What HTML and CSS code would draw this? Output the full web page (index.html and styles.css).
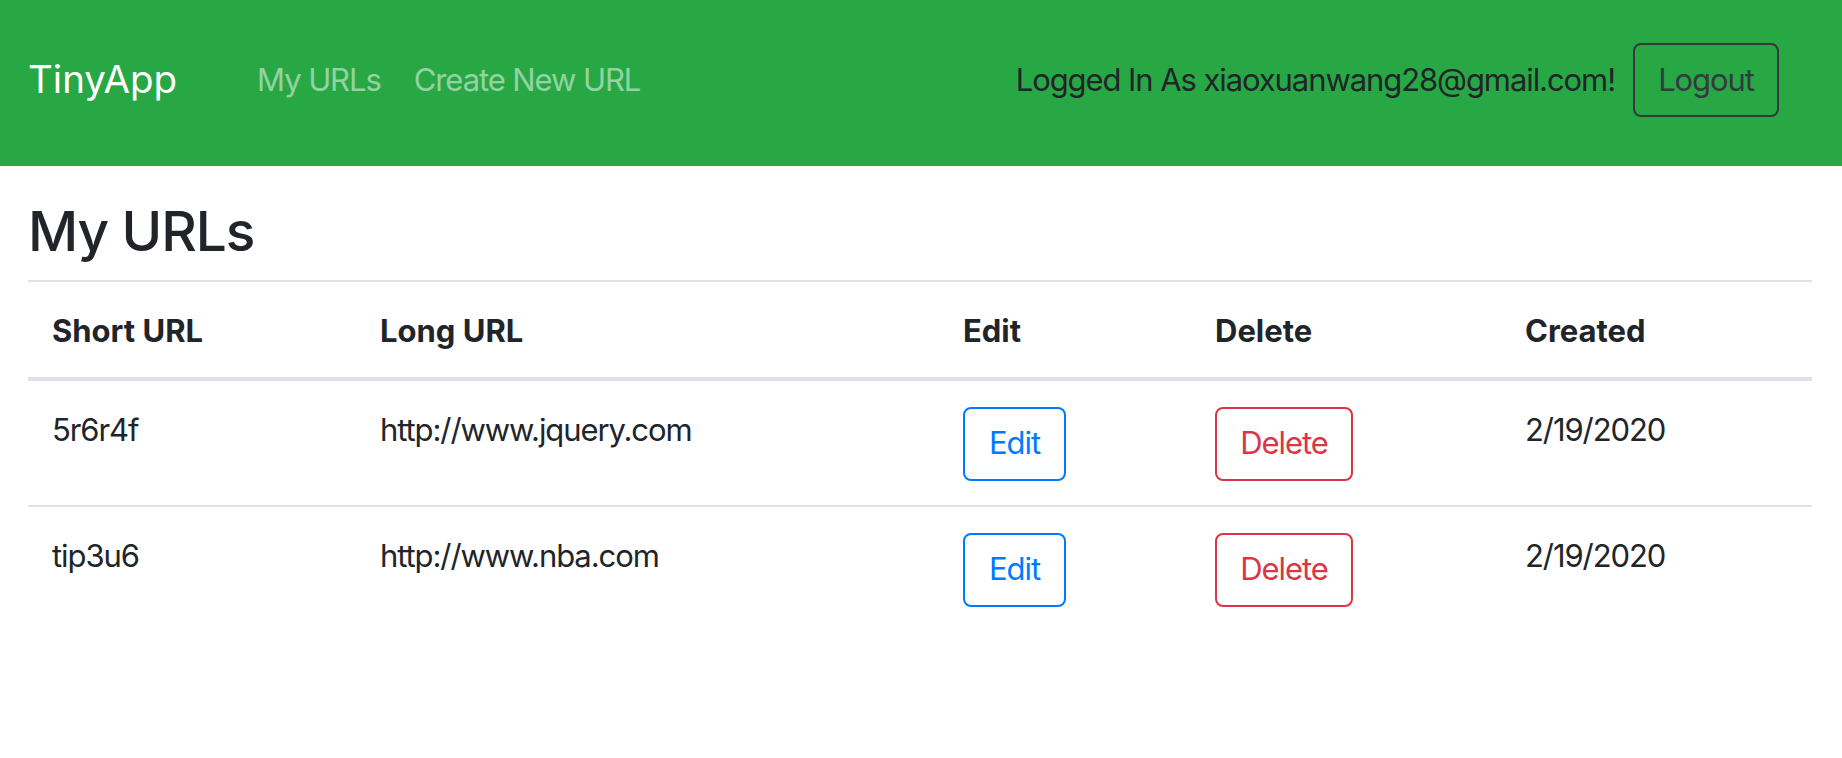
FILE: index.html
```html
<!DOCTYPE html>
<html lang="en">
<head>
<meta charset="utf-8">
<title>TinyApp</title>
<link rel="stylesheet" href="styles.css">
</head>
<body>
<nav class="navbar">
  <a class="brand" href="#">TinyApp</a>
  <div class="nav-links">
    <a class="nav-link" href="#">My URLs</a>
    <a class="nav-link" href="#">Create New URL</a>
  </div>
  <div class="nav-user">
    <span class="user-text">Logged In As xiaoxuanwang28@gmail.com!</span>
    <button class="btn btn-dark">Logout</button>
  </div>
</nav>
<main class="main">
  <h3 class="title">My URLs</h3>
  <table class="table">
    <colgroup>
      <col class="c1"><col class="c2"><col class="c3"><col class="c4"><col class="c5">
    </colgroup>
    <thead>
      <tr><th>Short URL</th><th>Long URL</th><th>Edit</th><th>Delete</th><th>Created</th></tr>
    </thead>
    <tbody>
      <tr>
        <td>5r6r4f</td>
        <td>http://www.jquery.com</td>
        <td><button class="btn btn-blue">Edit</button></td>
        <td><button class="btn btn-red">Delete</button></td>
        <td>2/19/2020</td>
      </tr>
      <tr>
        <td>tip3u6</td>
        <td>http://www.nba.com</td>
        <td><button class="btn btn-blue">Edit</button></td>
        <td><button class="btn btn-red">Delete</button></td>
        <td>2/19/2020</td>
      </tr>
    </tbody>
  </table>
</main>
</body>
</html>
```

FILE: styles.css
```css
* { box-sizing: border-box; }
html, body { margin: 0; padding: 0; }
body {
  font-family: Inter, "Noto Sans", "Liberation Sans", sans-serif;
  font-size: 31px;
  line-height: 1.5;
  letter-spacing: -0.035em;
  color: #212529;
  background: #fff;
}
.navbar {
  height: 166px;
  background: #28a745;
  display: flex;
  align-items: center;
  padding: 0 63px 6px 28px;
}
.brand {
  color: #fff;
  text-decoration: none;
  font-size: 38.5px;
  line-height: 1.5;
  letter-spacing: 0;
  margin-right: 80px;
}
.nav-links { display: flex; gap: 33px; }
.nav-link {
  color: rgba(255,255,255,0.5);
  text-decoration: none;
}
.nav-user {
  margin-left: auto;
  display: flex;
  align-items: center;
  gap: 18px;
}
.btn {
  font-family: inherit;
  font-size: 31px;
  line-height: 1.5;
  letter-spacing: -0.035em;
  height: 74px;
  padding: 0 20px;
  background: transparent;
  border: 2px solid;
  border-radius: 8px;
}
.btn-dark { color: #343a40; border-color: #343a40; width: 146px; }
.btn-blue { color: #007bff; border-color: #007bff; width: 103px; }
.btn-red { color: #dc3545; border-color: #dc3545; width: 138px; }
.main { padding: 32px 30px 0 28px; }
.title {
  font-size: 55px;
  font-weight: 500;
  line-height: 1.2;
  letter-spacing: -0.02em;
  margin: 0 0 16px;
}
.table {
  width: 100%;
  border-collapse: collapse;
  table-layout: fixed;
}
.c1 { width: 328px; }
.c2 { width: 583px; }
.c3 { width: 252px; }
.c4 { width: 310px; }
.table th, .table td {
  text-align: left;
  vertical-align: top;
  padding: 26px 24px 22px;
  border-top: 2px solid #dee2e6;
}
.table td { padding-bottom: 24px; }
.table th { font-weight: 700; letter-spacing: 0; }
.table thead th { border-bottom: 4px solid #dee2e6; }
.table tbody tr:first-child td { border-top: 0; }
```
